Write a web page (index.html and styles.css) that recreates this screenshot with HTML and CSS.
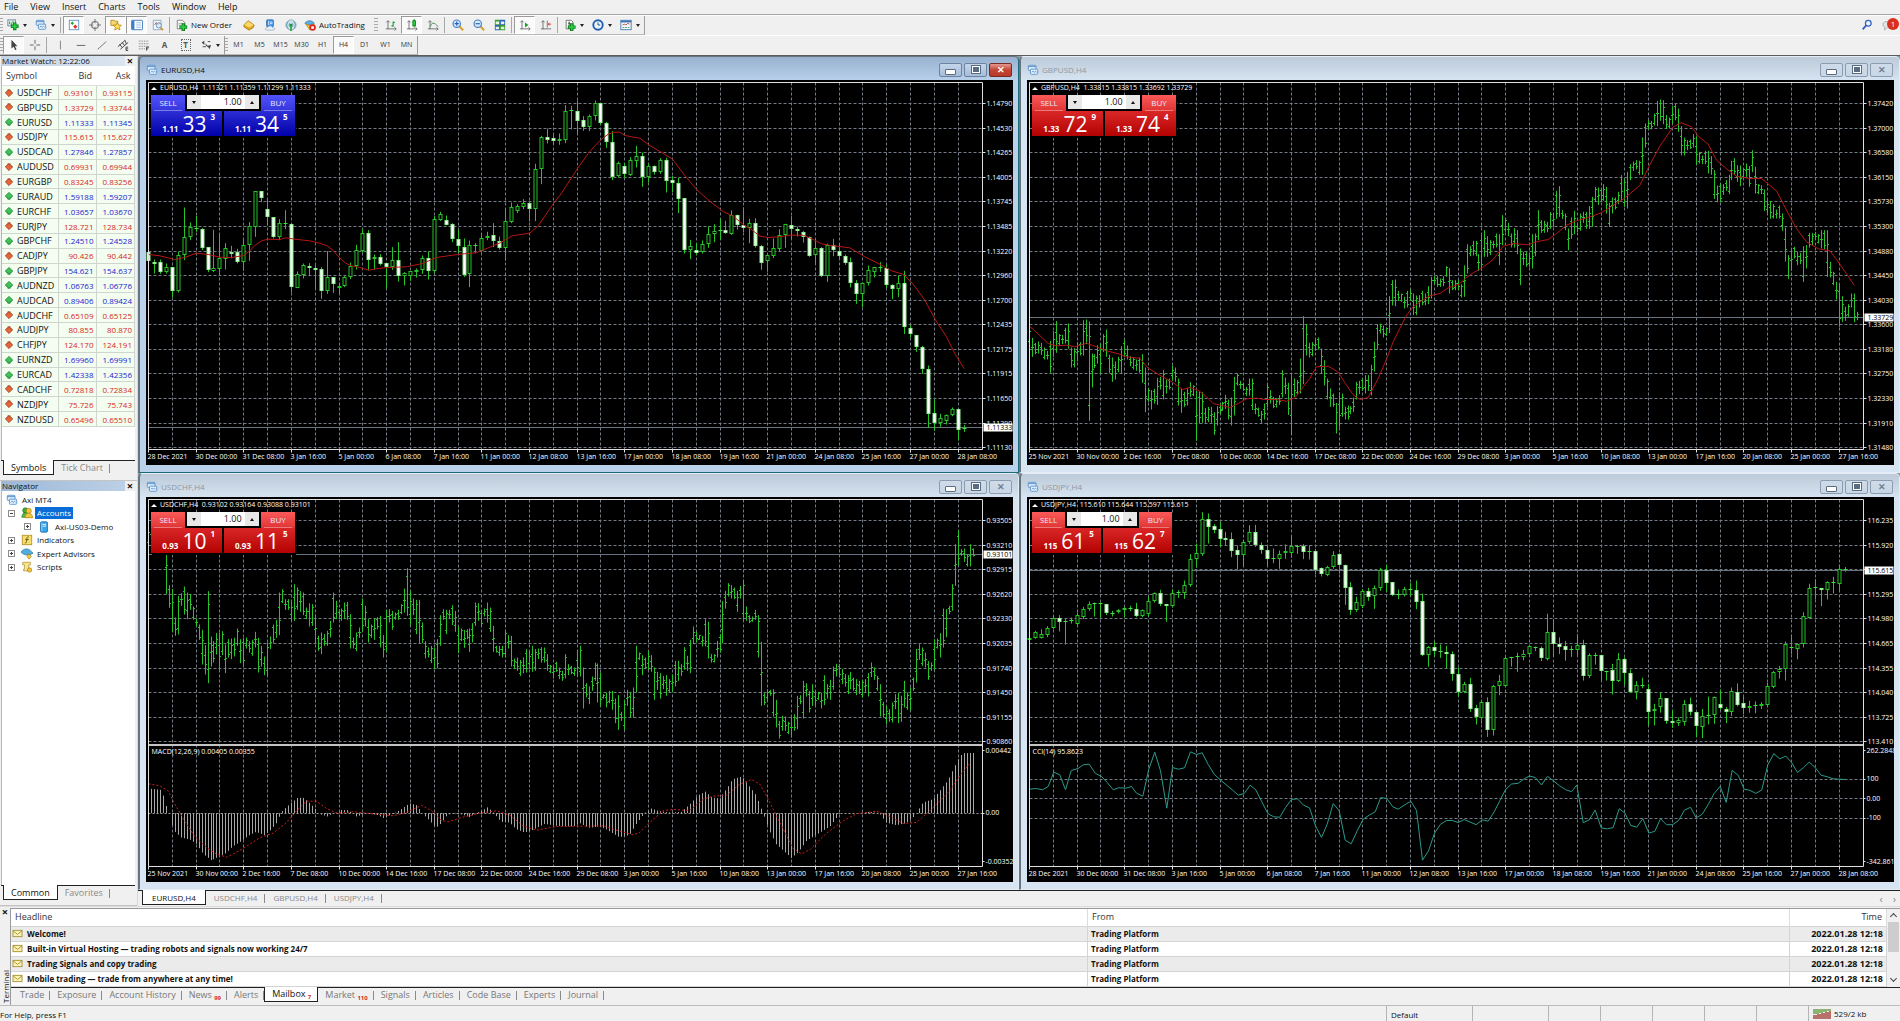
FILE: index.html
```html
<!DOCTYPE html>
<html lang="en">
<head>
<meta charset="utf-8">
<title>Axi MT4 - EURUSD,H4</title>
<link rel="stylesheet" href="styles.css">
</head>
<body>
<svg class="sprite" aria-hidden="true">
  <symbol id="i-plus" viewBox="0 0 14 14"><rect x="1" y="1" width="9" height="7" fill="#e4efe6" stroke="#5d86a8"/><path d="M3 6V3M5 7V4M7 5V2" stroke="#3a8a4a"/><path d="M9 4v9M4.500 8.500h9" stroke="#0b7a1c" stroke-width="4"/><path d="M9 5v7M5.500 8.500h7" stroke="#2ad043" stroke-width="2"/></symbol>
  <symbol id="i-windows" viewBox="0 0 14 14"><rect x="1.500" y="1.500" width="9" height="6" rx="1" fill="#dcecfb" stroke="#4f8cc9"/><path d="M1.500 3h9" stroke="#4f8cc9"/><rect x="4" y="6" width="8.500" height="6" rx="1" fill="#eaf4fd" stroke="#4f8cc9"/><path d="M5.500 10l1.500-2 1.500 2 1.500-2 1 2" fill="none" stroke="#4f8cc9" stroke-width=".8"/></symbol>
  <symbol id="i-market" viewBox="0 0 14 14"><rect x="1.500" y="1.500" width="11" height="11" fill="#fff" stroke="#5b8fc4"/><path d="M5 3l2 2-2 2-2-2z" fill="#1fa530"/><path d="M8.500 6.500l2.500 2.500-2.500 2.500L6 9z" fill="#e0301c"/></symbol>
  <symbol id="i-target" viewBox="0 0 14 14"><circle cx="7" cy="7" r="4" fill="none" stroke="#777" stroke-width="1.200"/><path d="M7 0v5M7 9v5M0 7h5M9 7h5" stroke="#777" stroke-width="1.200"/></symbol>
  <symbol id="i-star" viewBox="0 0 14 14"><path d="M1 1.500h4l1 1h3v5H1z" fill="#f7d774" stroke="#b38a1a"/><path d="M8.500 4l1.500 3 3.300.300-2.500 2.200.800 3.300-3.100-1.700-3 1.700.700-3.300L3.800 7.300 7.100 7z" fill="#ffdf4a" stroke="#a97b08" stroke-width=".8"/></symbol>
  <symbol id="i-terminal" viewBox="0 0 14 14"><rect x=".5" y="1.500" width="13" height="11" rx="1" fill="#fff" stroke="#2f6cb3"/><rect x="1" y="2" width="3" height="10" fill="#3d7cc9"/><path d="M6 4h6M6 6h6M6 8h6M6 10h6" stroke="#a9c6e8"/></symbol>
  <symbol id="i-tester" viewBox="0 0 14 14"><path d="M1.500 1.500h9v11h-9z" fill="#f3f7fb" stroke="#8aa0b5"/><path d="M3 7l2-3 2 3 2-3" fill="none" stroke="#c04a3a"/><circle cx="8" cy="7.500" r="3" fill="#d3e8fa" fill-opacity=".8" stroke="#5a8fc0"/><path d="M10 10l3 3" stroke="#d09a2a" stroke-width="2"/></symbol>
  <symbol id="i-order" viewBox="0 0 14 14"><path d="M1.500 1.500h6l3 3v7h-9z" fill="#fff" stroke="#777"/><path d="M3 5h5M3 7h3" stroke="#999"/><path d="M8.500 5v9M4 9.500h9" stroke="#0b7a1c" stroke-width="4"/><path d="M8.500 6v7M5 9.500h7" stroke="#2ad043" stroke-width="2"/></symbol>
  <symbol id="i-gold" viewBox="0 0 14 14"><path d="M1 7l5-5 7 5-1 3-5 3-6-4z" fill="#e3a81f" stroke="#9a6a08" stroke-width=".8"/><path d="M1.500 7L6 2.500 12.500 7 7.500 10z" fill="#fbd86a"/></symbol>
  <symbol id="i-vps" viewBox="0 0 14 14"><rect x="3" y="1" width="8" height="8" rx="1" fill="#2f8fe8" stroke="#1b62ab" stroke-width=".8"/><path d="M5.500 2v5M7 3.500h3M7 5.500h3" stroke="#fff"/><path d="M3 13c-3-1-1-4 1-3 1-3 6-2 6 0 3 0 3 3 1 3z" fill="#e6eef7" stroke="#8ca5c0" stroke-width=".8"/></symbol>
  <symbol id="i-signal" viewBox="0 0 14 14"><circle cx="7" cy="7" r="6" fill="#cfe3ea" stroke="#8fb0bc"/><path d="M4 11a5 5 0 010-8M10 11a5 5 0 000-8M5.500 9a3 3 0 010-4M8.500 9a3 3 0 000-4" fill="none" stroke="#4d93a6"/><circle cx="7" cy="7" r="1.500" fill="#1a8f3a"/><path d="M7 8v6" stroke="#27a548" stroke-width="2"/></symbol>
  <symbol id="i-auto" viewBox="0 0 14 14"><path d="M1 5c2-4 9-4 11 0-3 2-8 2-11 0z" fill="#5bb1e0" stroke="#2c7cae" stroke-width=".8"/><path d="M2 6l5 7 5-7c-3 2-7 2-10 0z" fill="#f3c53c" stroke="#b8860b" stroke-width=".8"/><circle cx="10" cy="10" r="3.800" fill="#d9281c"/><rect x="8.500" y="8.500" width="3" height="3" fill="#fff"/></symbol>
  <symbol id="i-bars" viewBox="0 0 14 14"><path d="M3.500 2v10M1 11.500h12M1.500 4l2-2 2 2M11 9.500l2 2-2 2" fill="none" stroke="#666"/><path d="M9.500 3v6M7.500 8h2M9.500 4h2" stroke="#18a02c" stroke-width="1.300"/></symbol>
  <symbol id="i-candle" viewBox="0 0 14 14"><path d="M3.500 2v10M1 11.500h12M1.500 4l2-2 2 2M11 9.500l2 2-2 2" fill="none" stroke="#666"/><path d="M9.500 0v10" stroke="#0b7a1c"/><rect x="8" y="2" width="3" height="6" fill="#2ad043" stroke="#0b7a1c"/></symbol>
  <symbol id="i-line" viewBox="0 0 14 14"><path d="M3.500 2v10M1 11.500h12M1.500 4l2-2 2 2M11 9.500l2 2-2 2" fill="none" stroke="#666"/><path d="M4 9c1-5 4-6 9 0" fill="none" stroke="#3b8a48"/></symbol>
  <symbol id="i-zin" viewBox="0 0 14 14"><path d="M8 8l5 5" stroke="#d6a32c" stroke-width="2.500"/><circle cx="5.500" cy="5.500" r="4.300" fill="#d8eafb" stroke="#3f7fc6" stroke-width="1.300"/><path d="M3 5.500h5M5.500 3v5" stroke="#2b62b8" stroke-width="1.400"/></symbol>
  <symbol id="i-zout" viewBox="0 0 14 14"><path d="M8 8l5 5" stroke="#d6a32c" stroke-width="2.500"/><circle cx="5.500" cy="5.500" r="4.300" fill="#d8eafb" stroke="#3f7fc6" stroke-width="1.300"/><path d="M3 5.500h5" stroke="#2b62b8" stroke-width="1.400"/></symbol>
  <symbol id="i-tile" viewBox="0 0 14 14"><path d="M1 1h6v6H1zM7 7h6v6H7z" fill="#3f9c2c"/><path d="M7 1h6v6H7zM1 7h6v6H1z" fill="#2d63b8"/><path d="M2 3h4v3H2zM8 3h4v3H8zM2 9h4v3H2zM8 9h4v3H8z" fill="#e8f4e4"/></symbol>
  <symbol id="i-scroll" viewBox="0 0 14 14"><path d="M3.500 2v10M1 11.500h12M1.500 4l2-2 2 2M11 9.500l2 2-2 2" fill="none" stroke="#666"/><path d="M7 4l4 3-4 3z" fill="#18a02c"/></symbol>
  <symbol id="i-shift" viewBox="0 0 14 14"><path d="M3.500 2v10M1 11.500h12M1.500 4l2-2 2 2M8.500 2v8" fill="none" stroke="#666"/><path d="M13 6H9.500M11 4.500L9.500 6 11 7.500" stroke="#c8321e" fill="none"/></symbol>
  <symbol id="i-ind" viewBox="0 0 14 14"><path d="M2.500 1.500h6l2 2v8h-8z" fill="#fff" stroke="#666"/><path d="M6 3v6M5 5h2" stroke="#333"/><path d="M9 5v9M4.500 9.500h9" stroke="#0b7a1c" stroke-width="4"/><path d="M9 6v7M5.500 9.500h7" stroke="#2ad043" stroke-width="2"/></symbol>
  <symbol id="i-clock" viewBox="0 0 14 14"><circle cx="7" cy="7" r="5.500" fill="#e9f3fd" stroke="#1f5fae" stroke-width="2.200"/><path d="M7 4v3h2.500" fill="none" stroke="#1f3f70"/></symbol>
  <symbol id="i-tpl" viewBox="0 0 14 14"><rect x="1" y="1.500" width="12" height="11" fill="#f5f9fd" stroke="#3874b5"/><path d="M1 3h12" stroke="#3874b5" stroke-width="2"/><path d="M3 7l2-1 2 1 2-2 2 1" fill="none" stroke="#b8382a"/><path d="M3 10h8" stroke="#3a8a4a" stroke-dasharray="2 1"/></symbol>
  <symbol id="i-cursor" viewBox="0 0 14 14"><path d="M4 1v10l2.500-2 2 4 1.500-1-2-3.500H11z" fill="#444"/></symbol>
  <symbol id="i-cross" viewBox="0 0 14 14"><path d="M7 1v4.500M7 8.500V13M1 7h4.500M8.500 7H13" stroke="#555"/></symbol>
  <symbol id="i-vline" viewBox="0 0 14 14"><path d="M7.500 2v10" stroke="#777"/></symbol>
  <symbol id="i-hline" viewBox="0 0 14 14"><path d="M2 7.500h10" stroke="#555"/></symbol>
  <symbol id="i-trend" viewBox="0 0 14 14"><path d="M2 12l10-9" stroke="#666"/></symbol>
  <symbol id="i-chan" viewBox="0 0 14 14"><path d="M1 9l8-7M4 12l9-8M3 6l3 4M6 4l3 4M9 1l2 5" stroke="#444" stroke-width="1.100"/><path d="M13 9.500h-2.500v4H13M10.500 11.500H13" stroke="#333" fill="none"/></symbol>
  <symbol id="i-fibo" viewBox="0 0 14 14"><path d="M1 2.500h12M1 5.500h12M1 8.500h12M1 11.500h7" stroke="#666" stroke-dasharray="1 1"/><path d="M13 9.500h-3v4M10 11.500h2" stroke="#333" fill="none"/></symbol>
  <symbol id="i-arrows" viewBox="0 0 14 14"><path d="M2 4l3-2v5zM6 5l3 3 4-1-2 5-1-2-3-2z" fill="#444"/><path d="M3 9h4M9 3h3" stroke="#444"/></symbol>
  <symbol id="i-search" viewBox="0 0 14 14"><circle cx="8.500" cy="5" r="3.300" fill="#eef4fc" stroke="#3464c0" stroke-width="1.500"/><path d="M6 7.500L2 12" stroke="#3464c0" stroke-width="2.200"/></symbol>
  <symbol id="i-chat" viewBox="0 0 14 14"><path d="M1 6c0-4 10-4 10 0s-4 4-5 4l-3 3V9C2 9 1 8 1 6z" fill="#e4e4e4" stroke="#a8a8a8"/></symbol>
  <symbol id="i-down" viewBox="0 0 10 10"><path d="M3.500 1h3v2H8l1.500 2L5 9.500.5 5 2 3h1.500z" fill="#e8643a" stroke="#9c3a1c"/></symbol>
  <symbol id="i-up" viewBox="0 0 10 10"><path d="M3.500 9h3V7H8l1.500-2L5 .5.5 5 2 7h1.500z" fill="#3fc45a" stroke="#137a2a"/></symbol>
  <symbol id="i-users" viewBox="0 0 14 14"><circle cx="5" cy="4" r="3" fill="#3fae3c" stroke="#1e7a22" stroke-width=".8"/><path d="M1 12c0-7 8-7 8 0z" fill="#55bf45" stroke="#1e7a22" stroke-width=".8"/><circle cx="9" cy="4.500" r="3" fill="#f4c93c" stroke="#a87c10" stroke-width=".8"/><path d="M4.500 12.500c0-7 9-7 9 0z" fill="#f4c93c" stroke="#a87c10" stroke-width=".8"/></symbol>
  <symbol id="i-server" viewBox="0 0 14 14"><rect x="3" y="1" width="8" height="12" rx="1" fill="#3aa5ea" stroke="#1a6cb0"/><path d="M5.500 4h4M5.500 6h4" stroke="#fff"/><path d="M4.500 2v10" stroke="#a8dbfa"/></symbol>
  <symbol id="i-func" viewBox="0 0 14 14"><rect x="1.500" y="1.500" width="11" height="11" fill="#f7df6e" stroke="#b39124"/><path d="M9 3.500c-2-1-2 1-2.300 3.500S6 11 4.500 10.500M5 6.500h4" fill="none" stroke="#5d4a0c"/></symbol>
  <symbol id="i-hat" viewBox="0 0 14 14"><path d="M0 5c3-5 9-5 12-1l2 2C10 9 4 9 0 5z" fill="#4faede" stroke="#23719f" stroke-width=".8"/><path d="M9 7l3 2.500L9.500 13 7 10z" fill="#f6cf4a" stroke="#a87c10" stroke-width=".8"/></symbol>
  <symbol id="i-script" viewBox="0 0 14 14"><path d="M2 1.500h9v3H9v7H3v-2h1v-5H2z" fill="#f9e48e" stroke="#a88a2a" stroke-width=".8"/><circle cx="10" cy="10.500" r="2.500" fill="#f3c53c" stroke="#a87c10" stroke-width=".8"/></symbol>
  <symbol id="i-mail" viewBox="0 0 12 10"><rect x="1" y="1.500" width="10" height="7" fill="#fdf3b4" stroke="#a3912f"/><path d="M1 2l5 4 5-4" fill="none" stroke="#a3912f"/></symbol>
</svg>

<nav class="menubar" aria-label="Main menu">
  <a href="#file">File</a><a href="#view">View</a><a href="#insert">Insert</a><a href="#charts">Charts</a><a href="#tools">Tools</a><a href="#window">Window</a><a href="#help">Help</a>
</nav>

<div class="toolrow">
  <div class="toolbar" role="toolbar" aria-label="Standard">
    <span class="grip"></span>
    <button class="tool drop" title="New chart"><svg><use href="#i-plus"/></svg></button>
    <button class="tool drop" title="Profiles"><svg><use href="#i-windows"/></svg></button>
    <span class="sep"></span>
    <button class="tool on" title="Market Watch"><svg><use href="#i-market"/></svg></button>
    <button class="tool" title="Data Window"><svg><use href="#i-target"/></svg></button>
    <button class="tool on" title="Navigator"><svg><use href="#i-star"/></svg></button>
    <button class="tool on" title="Terminal"><svg><use href="#i-terminal"/></svg></button>
    <button class="tool" title="Strategy Tester"><svg><use href="#i-tester"/></svg></button>
    <span class="sep"></span>
    <button class="tool order"><svg><use href="#i-order"/></svg>New Order</button>
    <button class="tool" title="MetaEditor"><svg><use href="#i-gold"/></svg></button>
    <button class="tool" title="Virtual Hosting"><svg><use href="#i-vps"/></svg></button>
    <button class="tool" title="Signals"><svg><use href="#i-signal"/></svg></button>
    <button class="tool auto"><svg><use href="#i-auto"/></svg>AutoTrading</button>
    <span class="grip mid"></span>
    <button class="tool" title="Bar Chart"><svg><use href="#i-bars"/></svg></button>
    <button class="tool on" title="Candlesticks"><svg><use href="#i-candle"/></svg></button>
    <button class="tool" title="Line Chart"><svg><use href="#i-line"/></svg></button>
    <span class="sep"></span>
    <button class="tool" title="Zoom In"><svg><use href="#i-zin"/></svg></button>
    <button class="tool" title="Zoom Out"><svg><use href="#i-zout"/></svg></button>
    <button class="tool" title="Tile Windows"><svg><use href="#i-tile"/></svg></button>
    <span class="sep"></span>
    <button class="tool on" title="Auto Scroll"><svg><use href="#i-scroll"/></svg></button>
    <button class="tool" title="Chart Shift"><svg><use href="#i-shift"/></svg></button>
    <span class="sep"></span>
    <button class="tool drop" title="Indicators"><svg><use href="#i-ind"/></svg></button>
    <button class="tool drop" title="Periods"><svg><use href="#i-clock"/></svg></button>
    <button class="tool drop" title="Templates"><svg><use href="#i-tpl"/></svg></button>
  </div>
  <div class="corner">
    <button class="tool" title="Search"><svg><use href="#i-search"/></svg></button>
    <button class="tool" title="Messages"><svg><use href="#i-chat"/></svg><span class="badge">1</span></button>
  </div>
</div>

<div class="toolrow">
  <div class="toolbar" role="toolbar" aria-label="Line studies">
    <span class="grip"></span>
    <button class="tool on" title="Cursor"><svg><use href="#i-cursor"/></svg></button>
    <button class="tool" title="Crosshair"><svg><use href="#i-cross"/></svg></button>
    <span class="sep"></span>
    <button class="tool" title="Vertical Line"><svg><use href="#i-vline"/></svg></button>
    <button class="tool" title="Horizontal Line"><svg><use href="#i-hline"/></svg></button>
    <button class="tool" title="Trendline"><svg><use href="#i-trend"/></svg></button>
    <button class="tool" title="Channel"><svg><use href="#i-chan"/></svg></button>
    <button class="tool" title="Fibonacci"><svg><use href="#i-fibo"/></svg></button>
    <button class="tool letter" title="Text">A</button>
    <button class="tool letter" title="Text Label"><span class="label-t">T</span></button>
    <button class="tool drop" title="Arrows"><svg><use href="#i-arrows"/></svg></button>
  </div>
  <div class="toolbar periods" role="toolbar" aria-label="Periods">
    <span class="grip"></span>
    <button class="tool">M1</button><button class="tool">M5</button><button class="tool">M15</button><button class="tool">M30</button><button class="tool">H1</button><button class="tool on">H4</button><button class="tool">D1</button><button class="tool">W1</button><button class="tool">MN</button>
  </div>
</div>

<main class="workspace">
  <aside class="side">
    <section class="panel">
      <header class="panel-title quiet"><h2>Market Watch: 12:22:06</h2><button title="Close">×</button></header>
      <div class="panel-body">
        <table class="quotes">
          <thead><tr><th>Symbol</th><th>Bid</th><th>Ask</th></tr></thead>
          <tbody>
            <tr class="dn"><td><svg><use href="#i-down"/></svg>USDCHF</td><td>0.93101</td><td>0.93115</td></tr>
            <tr class="dn"><td><svg><use href="#i-down"/></svg>GBPUSD</td><td>1.33729</td><td>1.33744</td></tr>
            <tr class="up"><td><svg><use href="#i-up"/></svg>EURUSD</td><td>1.11333</td><td>1.11345</td></tr>
            <tr class="dn"><td><svg><use href="#i-down"/></svg>USDJPY</td><td>115.615</td><td>115.627</td></tr>
            <tr class="up"><td><svg><use href="#i-up"/></svg>USDCAD</td><td>1.27846</td><td>1.27857</td></tr>
            <tr class="dn"><td><svg><use href="#i-down"/></svg>AUDUSD</td><td>0.69931</td><td>0.69944</td></tr>
            <tr class="dn"><td><svg><use href="#i-down"/></svg>EURGBP</td><td>0.83245</td><td>0.83256</td></tr>
            <tr class="up"><td><svg><use href="#i-up"/></svg>EURAUD</td><td>1.59188</td><td>1.59207</td></tr>
            <tr class="up"><td><svg><use href="#i-up"/></svg>EURCHF</td><td>1.03657</td><td>1.03670</td></tr>
            <tr class="dn"><td><svg><use href="#i-down"/></svg>EURJPY</td><td>128.721</td><td>128.734</td></tr>
            <tr class="up"><td><svg><use href="#i-up"/></svg>GBPCHF</td><td>1.24510</td><td>1.24528</td></tr>
            <tr class="dn"><td><svg><use href="#i-down"/></svg>CADJPY</td><td>90.426</td><td>90.442</td></tr>
            <tr class="up"><td><svg><use href="#i-up"/></svg>GBPJPY</td><td>154.621</td><td>154.637</td></tr>
            <tr class="up"><td><svg><use href="#i-up"/></svg>AUDNZD</td><td>1.06763</td><td>1.06776</td></tr>
            <tr class="up"><td><svg><use href="#i-up"/></svg>AUDCAD</td><td>0.89406</td><td>0.89424</td></tr>
            <tr class="dn"><td><svg><use href="#i-down"/></svg>AUDCHF</td><td>0.65109</td><td>0.65125</td></tr>
            <tr class="dn"><td><svg><use href="#i-down"/></svg>AUDJPY</td><td>80.855</td><td>80.870</td></tr>
            <tr class="dn"><td><svg><use href="#i-down"/></svg>CHFJPY</td><td>124.170</td><td>124.191</td></tr>
            <tr class="up"><td><svg><use href="#i-up"/></svg>EURNZD</td><td>1.69960</td><td>1.69991</td></tr>
            <tr class="up"><td><svg><use href="#i-up"/></svg>EURCAD</td><td>1.42338</td><td>1.42356</td></tr>
            <tr class="dn"><td><svg><use href="#i-down"/></svg>CADCHF</td><td>0.72818</td><td>0.72834</td></tr>
            <tr class="dn"><td><svg><use href="#i-down"/></svg>NZDJPY</td><td>75.726</td><td>75.743</td></tr>
            <tr class="dn"><td><svg><use href="#i-down"/></svg>NZDUSD</td><td>0.65496</td><td>0.65510</td></tr>
          </tbody>
        </table>
      </div>
      <div class="tabs side-tabs"><button class="tab active">Symbols</button><button class="tab">Tick Chart</button></div>
    </section>

    <section class="panel">
      <header class="panel-title"><h2>Navigator</h2><button title="Close">×</button></header>
      <div class="panel-body">
        <ul class="tree">
          <li class="root"><svg><use href="#i-windows"/></svg><span>Axi MT4</span></li>
          <li><i class="box minus"></i><svg><use href="#i-users"/></svg><span class="picked">Accounts</span></li>
          <li class="child"><i class="box"></i><svg><use href="#i-server"/></svg><span>Axi-US03-Demo</span></li>
          <li><i class="box"></i><svg><use href="#i-func"/></svg><span>Indicators</span></li>
          <li><i class="box"></i><svg><use href="#i-hat"/></svg><span>Expert Advisors</span></li>
          <li><i class="box"></i><svg><use href="#i-script"/></svg><span>Scripts</span></li>
        </ul>
      </div>
      <div class="tabs side-tabs"><button class="tab active">Common</button><button class="tab">Favorites</button></div>
    </section>
  </aside>

  <section class="desk">
    <div class="windows">
      <article class="win active">
        <header class="win-title"><svg><use href="#i-windows"/></svg><h3>EURUSD,H4</h3>
          <div class="win-buttons"><button class="wb min" title="Minimize"></button><button class="wb max" title="Maximize"></button><button class="wb close" title="Close">✕</button></div></header>
        <div class="chart">
          <svg class="plot" data-chart="eurusd"></svg>
          <p class="info">EURUSD,H4&nbsp; 1.11321 1.11359 1.11299 1.11333</p>
          <form class="deal blue">
            <button type="button" class="side-btn">SELL</button>
            <div class="volume"><button type="button" class="vdown" title="Less"></button><input type="text" value="1.00" aria-label="Volume"><button type="button" class="vup" title="More"></button></div>
            <button type="button" class="side-btn">BUY</button>
            <button type="button" class="price"><small>1.11</small><b>33</b><sup>3</sup></button>
            <button type="button" class="price"><small>1.11</small><b>34</b><sup>5</sup></button>
          </form>
        </div>
      </article>

      <article class="win">
        <header class="win-title"><svg><use href="#i-windows"/></svg><h3>GBPUSD,H4</h3>
          <div class="win-buttons"><button class="wb min" title="Minimize"></button><button class="wb max" title="Maximize"></button><button class="wb close" title="Close">✕</button></div></header>
        <div class="chart">
          <svg class="plot" data-chart="gbpusd"></svg>
          <p class="info">GBPUSD,H4&nbsp; 1.33815 1.33815 1.33692 1.33729</p>
          <form class="deal red">
            <button type="button" class="side-btn">SELL</button>
            <div class="volume"><button type="button" class="vdown" title="Less"></button><input type="text" value="1.00" aria-label="Volume"><button type="button" class="vup" title="More"></button></div>
            <button type="button" class="side-btn">BUY</button>
            <button type="button" class="price"><small>1.33</small><b>72</b><sup>9</sup></button>
            <button type="button" class="price"><small>1.33</small><b>74</b><sup>4</sup></button>
          </form>
        </div>
      </article>

      <article class="win">
        <header class="win-title"><svg><use href="#i-windows"/></svg><h3>USDCHF,H4</h3>
          <div class="win-buttons"><button class="wb min" title="Minimize"></button><button class="wb max" title="Maximize"></button><button class="wb close" title="Close">✕</button></div></header>
        <div class="chart">
          <svg class="plot" data-chart="usdchf"></svg>
          <p class="info">USDCHF,H4&nbsp; 0.93102 0.93164 0.93088 0.93101</p>
          <form class="deal red">
            <button type="button" class="side-btn">SELL</button>
            <div class="volume"><button type="button" class="vdown" title="Less"></button><input type="text" value="1.00" aria-label="Volume"><button type="button" class="vup" title="More"></button></div>
            <button type="button" class="side-btn">BUY</button>
            <button type="button" class="price"><small>0.93</small><b>10</b><sup>1</sup></button>
            <button type="button" class="price"><small>0.93</small><b>11</b><sup>5</sup></button>
          </form>
        </div>
      </article>

      <article class="win">
        <header class="win-title"><svg><use href="#i-windows"/></svg><h3>USDJPY,H4</h3>
          <div class="win-buttons"><button class="wb min" title="Minimize"></button><button class="wb max" title="Maximize"></button><button class="wb close" title="Close">✕</button></div></header>
        <div class="chart">
          <svg class="plot" data-chart="usdjpy"></svg>
          <p class="info">USDJPY,H4&nbsp; 115.610 115.644 115.597 115.615</p>
          <form class="deal red narrow">
            <button type="button" class="side-btn">SELL</button>
            <div class="volume"><button type="button" class="vdown" title="Less"></button><input type="text" value="1.00" aria-label="Volume"><button type="button" class="vup" title="More"></button></div>
            <button type="button" class="side-btn">BUY</button>
            <button type="button" class="price"><small>115</small><b>61</b><sup>5</sup></button>
            <button type="button" class="price"><small>115</small><b>62</b><sup>7</sup></button>
          </form>
        </div>
      </article>
    </div>
    <div class="tabs desk-tabs">
      <button class="tab active">EURUSD,H4</button><button class="tab">USDCHF,H4</button><button class="tab">GBPUSD,H4</button><button class="tab">USDJPY,H4</button>
      <span class="tab-scroll"><button title="Left">‹</button><button title="Right">›</button></span>
    </div>
  </section>
</main>

<section class="terminal">
  <div class="handle"><button title="Close">×</button><span>Terminal</span></div>
  <div class="mailbox">
    <div class="mail-view">
      <table class="mail">
        <colgroup><col class="c-head"><col class="c-from"><col class="c-time"></colgroup>
        <thead><tr><th>Headline</th><th>From</th><th>Time</th></tr></thead>
        <tbody>
          <tr><td><svg><use href="#i-mail"/></svg>Welcome!</td><td>Trading Platform</td><td>2022.01.28 12:18</td></tr>
          <tr><td><svg><use href="#i-mail"/></svg>Built-in Virtual Hosting — trading robots and signals now working 24/7</td><td>Trading Platform</td><td>2022.01.28 12:18</td></tr>
          <tr><td><svg><use href="#i-mail"/></svg>Trading Signals and copy trading</td><td>Trading Platform</td><td>2022.01.28 12:18</td></tr>
          <tr><td><svg><use href="#i-mail"/></svg>Mobile trading — trade from anywhere at any time!</td><td>Trading Platform</td><td>2022.01.28 12:18</td></tr>
        </tbody>
      </table>
      <div class="scrollbar"><i class="arrow"></i><i class="thumb"></i><i class="arrow down"></i></div>
    </div>
    <div class="tabs term-tabs">
      <button class="tab">Trade</button><button class="tab">Exposure</button><button class="tab">Account History</button><button class="tab">News <sub>99</sub></button><button class="tab">Alerts</button><button class="tab active">Mailbox <sub>7</sub></button><button class="tab">Market <sub>110</sub></button><button class="tab">Signals</button><button class="tab">Articles</button><button class="tab">Code Base</button><button class="tab">Experts</button><button class="tab">Journal</button>
    </div>
  </div>
</section>

<footer class="status">
  <span class="help">For Help, press F1</span><span class="profile">Default</span><span></span><span></span><span></span><span></span><span></span><span></span>
  <span class="net"><svg viewBox="0 0 18 10"><path d="M1 0v5M3 0v5M5 0v5M7 0v4M9 0v4M11 0v3M13 0v3M15 0v2M17 0v2" stroke="#5f9a3c" stroke-width="1.400"/><path d="M1 6v4M3 6v4M5 5v5M7 5v5M9 4v6M11 4v6M13 3v7M15 3v7M17 2v8" stroke="#a03a30" stroke-width="1.400"/></svg>529/2 kb</span>
</footer>
<script src="charts.js"></script>
</body>
</html>
```

FILE: styles.css
```css
* { box-sizing: border-box; }
:root { --ui: "Open Sans", "Noto Sans", sans-serif; }
html, body { height: 100%; }
body {
  margin: 0; display: flex; flex-direction: column; overflow: hidden;
  font: 8px/12px var(--ui); color: #111; background: #f0f0f0;
}
button, input { font: inherit; color: inherit; margin: 0; padding: 0; border: 0; background: none; }
a { color: inherit; text-decoration: none; }
h2, h3, p, ul { margin: 0; padding: 0; font: inherit; list-style: none; }
table { border-collapse: collapse; table-layout: fixed; width: 100%; }
th, td { padding: 0; font-weight: inherit; text-align: left; white-space: nowrap; }
.sprite { position: absolute; width: 0; height: 0; }

.menubar { flex: none; display: flex; gap: 12px; height: 15px; padding: 0 4px; border-bottom: 1px solid #a8a8a8; font-size: 9px; line-height: 13px; }

.toolrow { flex: none; display: flex; height: 20px; border-top: 1px solid #fcfcfc; }
.toolbar { display: flex; align-items: center; height: 19px; border-right: 1px solid #9c9c9c; border-bottom: 1px solid #b8b8b8; }
.grip { width: 3px; height: 15px; background: repeating-linear-gradient(#a8a8a8 0 1px, #f0f0f0 1px 3px); }
.grip.mid { width: 4px; margin: 0 2px; }
.sep { width: 4px; height: 16px; background: linear-gradient(90deg, transparent 1px, #a8a8a8 1px 2px, transparent 2px); }
.tool { position: relative; display: flex; align-items: center; justify-content: center; width: 21px; height: 18px; color: #333; }
.tool svg { width: 12px; height: 12px; flex: none; }
.tool.on { background: #fafafa; border: 1px solid; border-color: #9a9a9a #fff #fff #9a9a9a; }
.tool.drop { width: 28px; justify-content: flex-start; gap: 4px; padding-left: 4px; }
.tool.drop::after { content: ""; border: 2px solid transparent; border-top: 3px solid #222; border-bottom: 0; }
.tool.order, .tool.auto { width: 66px; justify-content: flex-start; gap: 3px; padding-left: 4px; color: #111; }
.tool.auto { width: 71px; padding-left: 3px; }
.tool.letter { font-weight: bold; color: #555; }
.label-t { border: 1px dotted #666; width: 10px; line-height: 10px; }
.periods { font-size: 7px; }
.corner { margin-left: auto; display: flex; padding-right: 2px; }
.badge { position: absolute; right: -1px; top: 2px; width: 12px; height: 12px; border-radius: 50%; background: #d8301c; color: #fff; text-align: center; line-height: 12px; }

.workspace { flex: 1; min-height: 0; display: grid; grid-template-columns: 138px minmax(0, 1fr); border-top: 1px solid #5c5c5c; }
.side { display: grid; grid-template-rows: 1fr 1fr; min-height: 0; border-right: 1px solid #d8d8d8; }
.panel { display: flex; flex-direction: column; min-height: 0; padding: 0 2px 5px 1px; border-bottom: 1px solid #c4c4c4; }
.panel-title { display: flex; height: 10px; line-height: 10px; }
.panel-title h2 { flex: 1; padding-left: 1px; background: linear-gradient(90deg, #9db8d6, #bcd0e6); }
.panel-title.quiet h2 { background: linear-gradient(90deg, #c4d3e4, #dbe5f0); }
.panel-title button { width: 10px; font-weight: bold; font-size: 11px; line-height: 8px; }
.panel-body { flex: 1; min-height: 0; background: #fff; border-left: 1px solid #b8b8b8; overflow: hidden; }

.quotes { height: 361px; }
.quotes th { height: 19px; border-bottom: 1px solid #ddd; padding: 1px 4px 0; color: #333; font-size: 9px; }
.quotes th:first-child { width: 56px; }
.quotes th:nth-child(2) { width: 38px; }
.quotes td { background: #f3fdf0; border: 1px solid #cfd6cf; border-left: 0; padding-left: 15px; position: relative; line-height: 13px; }
.quotes td:first-child { font-size: 9px; }
.quotes th + th, .quotes td + td { text-align: right; padding: 0 2px; }
.quotes th + th { padding: 1px 4px 0; }
.quotes td svg { position: absolute; left: 3px; top: 3px; width: 8px; height: 8px; }
.quotes .dn td + td { color: #d8281c; }
.quotes .up td + td { color: #1c1cd0; }

.tabs { flex: none; display: flex; height: 15px; line-height: 13px; border-top: 1px solid #222; color: #8a8a8a; }
.side-tabs { font-size: 9px; padding-left: 2px; }
.tab { padding: 0 7px; position: relative; height: 13px; }
.tab::after { content: ""; position: absolute; right: 0; top: 3px; height: 9px; border-right: 1px solid #8a8a8a; }
.tab.active { margin-top: -1px; height: 15px; background: #fff; color: #111; border: 1px solid #222; border-top: 0; }
.tab.active::after { display: none; }
.tab sub { font-size: 6px; line-height: 6px; vertical-align: -2px; font-weight: bold; color: #d8281c; }

.tree { display: flex; flex-direction: column; height: 83px; padding: 2px 0 0 6px; }
.tree li { flex: 1; display: flex; align-items: center; gap: 4px; }
.tree li.root svg { margin-left: -2px; }
.tree li.child { padding-left: 16px; gap: 5px; }
.tree svg { width: 12px; height: 12px; }
.tree .picked { background: #0a6cd6; color: #fff; padding: 0 2px; margin-left: -2px; }
.box { width: 7px; height: 7px; margin-right: 2px; border: 1px solid #8c8c8c; background: linear-gradient(#444, #444) center / 3px 1px no-repeat, linear-gradient(#444, #444) center / 1px 3px no-repeat; }
.box.minus { background: linear-gradient(#444, #444) center / 3px 1px no-repeat; }

.desk { display: flex; flex-direction: column; min-width: 0; min-height: 0; }
.windows { flex: 1; min-height: 0; display: grid; grid-template: 1fr 1fr / 1fr 1fr; background: #8a98a4; border-bottom: 1px solid #222; }
.win { display: flex; flex-direction: column; min-width: 0; min-height: 0; padding: 0 5px 7px 6px; border: 1px solid #e4edf5; border-left: 2px solid #66757f; border-radius: 5px 5px 0 0; background: linear-gradient(#bccad9, #d7e4f1 24px); }
.win.active { background: linear-gradient(#98b1d0, #b9d1ea 24px); border-color: #66757f #1b6c78 #1b6c78 #66757f; }
.win-title { flex: none; height: 23px; display: flex; align-items: center; gap: 3px; padding: 2px 1px 0 0; color: #8d97a3; }
.win.active .win-title { color: #111; }
.win-title svg { width: 12px; height: 12px; }
.win-buttons { margin-left: auto; display: flex; gap: 2px; }
.wb { width: 23px; height: 14px; border: 1px solid #8d9db1; border-radius: 2px; background: linear-gradient(#cfdbe8, #c8d6e5); display: grid; place-items: center; font-size: 9px; line-height: 10px; font-weight: bold; color: #6f7f92; }
.win.active .wb { border-color: #6d83a0; background: linear-gradient(#c5d6ea, #a4bcd8); }
.wb.min::before { content: ""; width: 9px; height: 4px; margin-top: 4px; border: 1px solid #5a6c82; border-radius: 1px; background: #fff; }
.wb.max::before { content: ""; width: 8px; height: 7px; border: 1px solid #5a6c82; background: #5a6c82; box-shadow: inset 0 0 0 1px #fff; }
.win.active .wb.close { background: linear-gradient(#e49a90, #c44433 50%, #b93a2a); border-color: #7a2a22; color: #fff; }

.chart { position: relative; flex: 1; min-height: 0; background: #000; overflow: hidden; color: #fff; }
.plot { position: absolute; inset: 0; width: 100%; height: 100%; display: block; font: 7px var(--ui); }
.info { position: absolute; left: 14px; top: 4px; font-size: 7px; line-height: 8px; white-space: pre; }
.info::before { content: ""; position: absolute; left: -9px; top: 3px; border: 3px solid transparent; border-bottom: 3px solid #fff; border-top: 0; }
.deal { position: absolute; left: 5px; top: 15px; width: 144px; height: 42px; display: grid; grid-template: 16px 25px / 34px 36px 36px 34px; column-gap: 1px; justify-content: space-between; background: #000; box-shadow: 1px 1px 0 #000; }
.deal.narrow { width: 140px; grid-template-columns: 33px 35px 35px 33px; }
.side-btn { position: relative; color: #e8e8ff; }
.side-btn:nth-of-type(2) { grid-column: 4; }
.side-btn::after { content: ""; position: absolute; left: 3px; right: 3px; bottom: 0; border-top: 1px solid rgba(255, 255, 255, .35); }
.blue .side-btn { background: linear-gradient(#5252fa, #3535dc); }
.blue .price { background: linear-gradient(#2d2dd6, #0000a8); }
.red .side-btn { background: linear-gradient(#fb5a5a, #e03434); }
.red .price { background: linear-gradient(#da2626, #b30202); }
.volume { grid-column: 2 / 4; display: grid; grid-template-columns: 14px 1fr 14px; height: 14px; margin: 0 1px; background: #fff; color: #111; }
.volume input { width: 100%; min-width: 0; text-align: right; padding-right: 3px; font-size: 9px; }
.volume button { background: #e8e8e8; display: grid; place-items: center; }
.volume button::before { content: ""; border: 2px solid transparent; }
.volume .vdown::before { border-top: 3px solid #111; border-bottom: 0; }
.volume .vup::before { border-bottom: 3px solid #111; border-top: 0; }
.price { grid-column: span 2; display: flex; justify-content: center; align-items: flex-end; gap: 4px; padding-left: 4px; line-height: 24px; color: #fff; }
.price small { font-size: 8px; font-weight: bold; line-height: 15px; }
.price b { font-size: 21px; font-weight: 400; }
.price sup { font-size: 8px; font-weight: bold; line-height: 11px; align-self: flex-start; }

.desk-tabs { padding-left: 4px; border-top: 0; }
.desk-tabs .tab { padding: 0 9px; }
.desk-tabs .tab:not(.active) { padding: 0 8px; }
.tab-scroll { margin-left: auto; display: flex; gap: 10px; padding-right: 4px; font-size: 11px; }

.terminal { flex: none; display: grid; grid-template-columns: 10px minmax(0, 1fr); padding-top: 1px; height: 99px; border-top: 1px solid #dcdcdc; }
.handle { display: flex; flex-direction: column; justify-content: space-between; align-items: center; padding-bottom: 2px; }
.handle button { font-weight: bold; font-size: 11px; line-height: 8px; }
.handle span { writing-mode: vertical-rl; transform: rotate(180deg); line-height: 9px; }
.mailbox { display: flex; flex-direction: column; border-left: 1px solid #9a9a9a; min-width: 0; }
.mail-view { flex: 1; display: flex; background: #fff; border-top: 1px solid #9a9a9a; overflow: hidden; }
.mail { flex: 1; width: auto; line-height: 14px; }
.mail th { height: 17px; padding: 0 4px; border-right: 1px solid #ddd; color: #333; font-size: 9px; }
.mail td { height: 15px; padding: 0 3px; border: 1px solid #d4d4d4; border-left: 0; font-weight: bold; }
.mail td:last-child { font-size: 9px; }
.mail td:first-child { padding-left: 16px; position: relative; }
.mail td svg { position: absolute; left: 1px; top: 2px; width: 11px; height: 9px; }
.mail tbody tr:nth-child(odd) { background: #ebebeb; }
.mail th:last-child, .mail td:last-child { text-align: right; }
.c-from { width: 702px; }
.c-time { width: 97px; }
.scrollbar { flex: none; width: 13px; background: #f0f0f0; display: flex; flex-direction: column; align-items: center; padding: 3px 0; gap: 3px; }
.arrow { width: 5px; height: 5px; margin-top: 2px; border: 1px solid #444; border-right: 0; border-bottom: 0; transform: rotate(45deg); }
.arrow.down { margin: auto 0 3px; transform: rotate(225deg); }
.thumb { width: 11px; height: 30px; background: #cdcdcd; }
.term-tabs { height: 18px; padding-left: 2px; color: #777; font-size: 9px; }
.term-tabs .tab { height: 13px; line-height: 12px; padding: 0 6px 0 7px; }
.term-tabs .tab.active { height: 15px; }

.status { flex: none; display: flex; height: 16px; border-top: 1px solid #bcbcbc; line-height: 17px; }
.status span { width: 52px; border-left: 1px solid #b4b4b4; padding-left: 4px; }
.status .help { flex: 1; border: 0; padding: 0; }
.status .profile { width: 86px; }
.status .profile + span { width: 76px; }
.status .net { width: 92px; display: flex; gap: 3px; align-items: center; }
.status .net svg { width: 18px; height: 10px; }
```

FILE: charts.js
```js
// Chart geometry is stored in thirds of a pixel of a 834-pixel-wide plot.
// A candle is "high low bodyTop bodyBottom", with "+" on a rising one; a bar is "high low".
const DATES_SHORT = ["28 Dec 2021", "30 Dec 00:00", "31 Dec 08:00", "3 Jan 16:00", "5 Jan 00:00", "6 Jan 08:00", "7 Jan 16:00", "11 Jan 00:00", "12 Jan 08:00", "13 Jan 16:00", "17 Jan 00:00", "18 Jan 08:00", "19 Jan 16:00", "21 Jan 00:00", "24 Jan 08:00", "25 Jan 16:00", "27 Jan 00:00", "28 Jan 08:00"];
const DATES_LONG = ["25 Nov 2021", "30 Nov 00:00", "2 Dec 16:00", "7 Dec 08:00", "10 Dec 00:00", "14 Dec 16:00", "17 Dec 08:00", "22 Dec 00:00", "24 Dec 16:00", "29 Dec 08:00", "3 Jan 00:00", "5 Jan 16:00", "10 Jan 08:00", "13 Jan 00:00", "17 Jan 16:00", "20 Jan 08:00", "25 Jan 00:00", "27 Jan 16:00"];

// rows("a b,c d", scale, shift) parses a list of number groups.
const rows = (text, scale = 1, shift = 0) => text.trim().split(/\s*,\s*/).map(r => {
  const up = r.endsWith("+");
  const v = r.replace("+", "").trim().split(/\s+/).map(n => n * scale + shift);
  v.up = up;
  return v;
});
const path = (text, dx = 0, scale = 1, shift = 0) => text.trim().split(/\s*,\s*/).map(r => {
  const [x, y] = r.split(/\s+/).map(Number);
  return [x + dx, y * scale + shift];
});

const charts = {
  eurusd: {
    x0: 26, y0: 67, step: 17.86, dates: DATES_SHORT, base: 1101,
    labels: ["1.14790", "1.14530", "1.14265", "1.14005", "1.13745", "1.13485", "1.13220", "1.12960", "1.12700", "1.12435", "1.12175", "1.11915", "1.11650", "1.11390", "1.11130"],
    last: ["1.11333", 1103],
    candles: rows(`575 668 577 605,598 640 606 612,598 641 606 636,610 640 621 636+,620 712 621 694,575 697 586 694+,442 600 532 586+,487 540 503 534+,467 515 504 508,503 570 507 564,562 636 563 633,509 636 626 634+,522 644 594 627+,549 628 565 597+,557 594 576 581,566 610 576 606,535 632 556 606+,486 602 499 556+,394 530 394 502+,394 426 394 416,416 496 447 472,471 535 472 532,477 540 490 532+,450 507 489 493,494 697 494 683,634 684 642 683+,610 655 616 646+,609 648 618 624,615 684 625 631,621 716 629 694,573 701 652 694+,652 698 652 672,671 701 679 685+,648 681 652 678+,607 657 620 653+,554 628 571 620+,507 577 519 572+,510 630 520 601,583 628 591 598+,582 616 591 612,609 686 609 622,561 629 601 622+,546 664 601 650,636 676 640 648+,633 662 634 648+,625 652 630 636+,586 641 594 630+,574 658 594 632,468 640 477 632+,455 482 462 480+,466 496 480 494,489 546 494 540,509 578 539 561,535 650 562 645,541 681 555 643+,549 579 555 557+,520 577 535 573+,515 540 528 535+,489 561 525 544,529 568 543 564,444 601 484 566+,427 489 441 486+,432 459 438 453+,417 447 429 440+,425 484 429 448,311 483 328 448+,227 372 231 328+,205 250 231 240,225 254 235 245,220 254 239 246+,135 249 154 241+,137 208 152 155,121 222 153 183,168 212 182 204,163 213 170 202+,121 181 131 170+,128 195 131 191,185 263 191 247,213 360 247 351,304 352 311 350+,309 353 320 345,291 347 300 344+,257 322 288 304+,277 380 289 352,310 367 319 352+,316 343 320 337,294 341 300 336+,293 397 301 363,348 396 362 371,353 459 369 417,415 580 416 573,539 597 559 572+,549 585 571 579,541 580 552 576+,499 563 522 553+,492 546 513 523+,476 539 510 512+,482 521 512 520,451 524 466 522+,463 508 467 497,442 516 496 505,476 549 489 503+,474 562 491 559,554 629 559 609,585 635 587 605+,535 594 565 589+,507 574 525 566+,491 563 492 525+,468 537 496 508,499 529 507 514,512 547 518 533,529 590 531 587,535 613 565 587+,561 651 566 650,550 665 557 650+,536 588 556 570,549 595 575 591,583 614 588 608,592 682 608 671,660 731 670 704,667 741 670 704+,616 676 632 670+,620 652 621 635+,606 635 621 625,613 684 624 674,672 717 675 686,646 711 669 686+,632 822 670 803,795 832 806 825,824 875 825 862,857 941 862 927,916 1103 927 1061,1018 1112 1060 1090,1061 1100 1075 1090+,1063 1093 1066 1085+,1042 1068 1048 1066+,1047 1141 1047 1109,1095 1115 1104 1108+`),
    average: path(`26 583,60 587,105 598,134 592,169 579,205 583,240 591,275 592,312 586,330 572,345 556,366 542,384 537,420 538,437 533,473 538,509 542,540 549,562 557,580 571,598 592,616 608,634 617,660 622,688 630,710 626,742 622,800 620,848 610,890 592,938 585,973 581,1009 578,1045 563,1081 548,1117 527,1170 519,1195 497,1223 456,1241 430,1260 406,1280 376,1313 325,1345 280,1366 256,1384 238,1405 222,1422 216,1440 216,1456 226,1480 231,1500 234,1528 255,1564 276,1598 297,1635 346,1671 389,1710 423,1750 454,1780 468,1815 497,1835 508,1860 528,1885 532,1920 530,1950 525,1990 525,2020 538,2045 551,2080 557,2130 563,2175 590,2220 612,2255 632,2290 642,2320 672,2355 720,2385 776,2420 830,2445 880,2473 926`)
  },
  gbpusd: {
    x0: 29, y0: 67, step: 8.93, dates: DATES_LONG, base: 1101,
    labels: ["1.37420", "1.37000", "1.36580", "1.36150", "1.35730", "1.35300", "1.34880", "1.34450", "1.34030", "1.33600", "1.33180", "1.32750", "1.32330", "1.31910", "1.31480"],
    last: ["1.33729", 772],
    bars: [
      ...rows(`806 852,833 890,848 882,844 880,848 884,862 898,872 898,842 938,813 890,783 878,822 856,824 852,803 850,790 866,862 922,864 922,846 904,846 886,780 886,778 852,784 1082,880 982,882 924,855 910,850 940,822 875,808 890,884 938,892 965,904 958,890 936,858 942,840 890,856 898,888 918,892 928,898 932,892 938,882 968,922 1056,985 1025,990 1048,986 1030,953 1034,950 988,930 1018,958 1000,955 988,916 962,922 965,955 1036,985 1058,995 1040,985 1036,966 1010,975 1008,992 1142,994 1090,996 1088,1044 1088,1040 1086,1040 1088,1056 1124,1038 1096,1030 1062,1025 1052,1004 1046,1018 1078,1012 1096,950 1066,940 976,962 986,968 992,980 1008,955 1006,955 1050,1030 1062,1042 1070,1052 1088,1030 1078,970 1042,990 1030,1010 1044,1015 1042,1005 1034,930 1012,952 1002,968 1064,945 1124,955 1010,960 1002,895 1000,768 972,792 886,848 892,846 888,838 872,832 868,865 940,900 976,955 1018,985 1040,1000 1040,1028 1120,996 1102,1000 1070,1040 1078,1036 1078,1038 1062,1012 1055,965 1018,962 1002,955 992,945 1000,945 992,914 1006,845 934,792 868,790 820,796 832,802 828,708 818,660 736,658 738,692 722,700 725,710 745,692 742,688 722,700 765,706 765,705 742,692 735,700 735,678 732,650 715,648 672,648 680,655 680,648 678,618 650,624 700,660 690,660 690,660 690,672 712,616 710,552 640`),
      ...rows(`738 768,722 766,722 768,762 812,702 812,690 770,708 770,720 765,722 745,700 742,702 795,645 735,655 695,668 708,700 742,684 742,690 762,745 855,755 795,755 800,765 800,702 805,700 768,630 720,660 698,662 698,665 696,636 686,638 680,572 656,558 650,630 656,640 690,685 750,652 716,632 702,668 696,640 692,635 668,635 686,618 686,590 680,560 604,562 614,564 605,552 602,560 640,608 680,592 640,592 628,575 612,525 600,535 620,515 625,492 540,484 512,480 508,482 524,412 524,370 442,360 388,362 388,340 376,302 378,298 362,300 372,345 386,352 384,318 370,310 360,325 395,378 466,412 466,420 450,418 446,402 442,408 494,455 490,466 492,452 492,452 520,468 524,510 596,556 606,550 606,552 584,540 572,524 582,482 540,474 522,495 545,496 558,505 532,490 530,498 560,450 516,500 580,552 582,555 582,568 632,600 640,602 656,612 655,628 655,616 655,640 692,682 784,765 836,745 812,740 775,755 795,758 792,738 845,735 805,698 742,698 735,695 718,702 730,690 745,690 748,690 830,785 832,815 855,845 898,850 980,888 965,920 962,912 950,880 922,880 966,935 960`, 1, -180)
    ],
    average: [
      ...path(`29 798,60 826,85 850,110 857,140 855,165 860,200 849,230 860,260 872,300 882,318 890,360 894,385 924,420 945,458 966,488 988,510 982,535 990,560 1010,580 1030,601 1035,630 1042,655 1030,680 1016,710 1014,735 1018,770 1018,800 1023,826 1012,850 980,870 955,890 920,925 918,955 936,975 968,1000 1004,1020 1018,1045 1012,1075 955,1101 895,1120 845,1140 805,1160 765,1180 740,1205 722,1230 707,1260 700,1285 683,1318 672,1335 656`),
      ...path(`40 818,68 802,100 778,130 738,160 730,205 734,230 725,265 718,290 700,320 675,350 662,385 652,424 638,450 622,490 597,540 556,567 500,600 438,640 380,665 368,695 380,715 408,745 432,770 480,800 506,830 528,870 535,905 535,950 572,985 640,1010 685,1040 725,1075 746,1110 752,1130 778,1165 828,1183 856`, 1320, 1, -180)
    ]
  },
  usdchf: {
    x0: 26, y0: 71, step: 8.93, dates: DATES_LONG, base: 1101, split: 806,
    labels: ["0.93505", "0.93210", "0.92915", "0.92620", "0.92330", "0.92035", "0.91740", "0.91450", "0.91155", "0.90860"],
    last: ["0.93101", 235],
    title: "MACD(12,26,9) 0.00405 0.00355",
    subLabels: [["0.00442", 825], ["0.00", 1012], ["-0.00352", 1157]],
    bars: rows(`165 205,150 200,150 200,150 200,160 210,160 220,190 355,328 396,340 468,425 480,360 476,352 390,332 416,350 430,354 402,392 432,428 452,446 492,462 566,508 596,346 622,482 572,496 560,472 536,470 582,466 538,506 592,490 545,488 550,486 542,458 510,490 562,486 568,485 518,496 530,492 540,468 515,486 590,510 572,542 598,500 600,482 520,446 502,432 486,350 478,340 382,370 402,370 402,375 435,325 435,335 402,346 408,350 418,395 430,382 452,385 450,416 502,480 525,470 535,475 510,465 510,435 485,350 440,375 430,400 430,398 435,380 430,378 432,415 518,485 518,470 526,455 486,368 466,390 452,430 500,446 486,428 492,424 460,420 515,478 545,402 530,400 440,405 462,410 432,402 432,385 415,338 410,277 420,345 448,368 418,372 475,372 503,440 502,496 548,515 545,510 562,515 580,490 578,418 510,400 432,402 475,402 430,388 448,405 468,452 532,458 496,462 516,460 490,458 528,442 500,380 450,382 435,405 450,398 422,380 440,395 468,450 528,510 530,510 540,510 545,462 545,478 518,480 572,548 580,545 585,552 600,545 592,520 590,525 580,510 588,520 585,518 550,514 560,515 560,535 585,568 592,568 608,558 588,575 610,585 615,535 608,565 598,570 595,575 600,528 600,510 602,575 698,622 665,632 685,602 645,560 615,563 680,590 690,655 668,650 695,645 682,645 702,668 742,658 762,708 735,672 762,642 690,648 725,635 725,510 650,530 552,538 598,545 580,525 582,538 588,575 672,588 642,592 668,600 640,598 660,610 650,596 648,555 632,555 615,565 600,514 582,540 585,492 592,452 505,468 500,478 492,480 512,430 512,438 548,535 560,535 560,495 545,475 530,376 502,345 398,322 362,328 368,335 370,345 408,330 368,312 432,392 435,418 442,422 438,402 432,418 545,498 690,652 688,640 675,642 660,640 722,672 755,735 788,720 765,722 765,738 775,725 785,715 765,660 760,658 685,615 728,622 662,645 710,625 690,650 688,648 672,652 698,598 688,625 668,612 672,572 642,564 602,564 605,580 625,595 632,598 655,588 640,605 645,610 658,615 655,612 665,610 650,592 662,560 604,575 612,600 645,625 722,678 725,690 745,700 738,680 740,655 700,652 742,660 738,615 695,650 702,635 705,605 645,520 620,505 552,515 570,530 575,556 612,560 585,490 582,488 518,472 545,398 515,400 484,390 415,325 405,205 330,163 268,220 240,218 258,235 272,205 272,218 242`),
    histogram: { zero: 1012, line: path(`26 938,62 942,71 960,80 992,89 1015,98 1050,106 1068,124 1085,151 1092,169 1104,190 1135,215 1154,240 1142,260 1132,280 1112,300 1100,330 1078,350 1068,375 1078,390 1066,412 1040,420 1020,429 1004,450 985,473 966,490 966,510 982,527 1000,536 1014,562 1022,580 1012,598 1008,607 1002,625 1003,640 1012,650 1022,665 1018,680 1012,715 1018,735 1028,750 1018,768 1010,785 1000,810 982,830 988,850 1015,870 1035,888 1056,902 1044,920 1020,935 1012,965 1016,990 1024,1010 1012,1027 1005,1045 994,1060 1008,1085 1038,1110 1040,1130 1060,1155 1070,1180 1062,1215 1044,1250 1050,1300 1052,1320 1042,1345 1056,1380 1052,1400 1060,1440 1084,1470 1078,1490 1045,1515 1012,1535 998,1555 1005,1590 1010,1625 1008,1650 985,1675 958,1697 947,1715 965,1740 968,1765 935,1780 910,1808 902,1825 925,1850 958,1870 1010,1890 1065,1910 1105,1955 1146,1975 1130,2000 1095,2040 1070,2070 1052,2100 1012,2150 1012,2190 1008,2220 1012,2240 1040,2270 1048,2300 1042,2325 1020,2350 980,2380 970,2400 945,2425 912,2440 880,2455 850,2468 832,2510 831`) },
    signal: path(`26 924,60 930,85 945,105 985,134 1035,165 1082,200 1115,230 1135,262 1144,310 1118,360 1086,400 1072,440 1040,470 1005,500 976,530 976,560 998,590 1012,640 1008,700 1014,760 1020,800 1010,845 988,875 1005,905 1034,925 1038,965 1025,1020 1012,1070 1005,1110 1018,1150 1050,1190 1063,1250 1052,1320 1051,1390 1050,1440 1066,1480 1077,1500 1070,1530 1040,1570 1004,1600 1001,1650 1004,1690 970,1720 961,1760 958,1800 925,1835 911,1860 925,1880 960,1900 1000,1930 1060,1960 1118,1985 1134,2010 1122,2060 1072,2110 1035,2150 1014,2210 1006,2250 1022,2290 1043,2330 1040,2370 1005,2430 945,2460 900,2493 860`)
  },
  usdjpy: {
    x0: 29, y0: 71, step: 17.86, dates: DATES_SHORT, base: 1101, split: 806,
    labels: ["116.235", "115.920", "", "115.295", "114.980", "114.665", "114.355", "114.040", "113.725", "113.410"],
    last: ["115.615", 283],
    title: "CCI(14) 95.8623",
    subLabels: [["262.2848", 824], ["100", 910], ["0.00", 968], ["-100", 1027], ["-342.861", 1157]],
    levels: [910, 968, 1027],
    candles: [
      ...rows(`457 495 487 494+,465 489 469 486+,460 488 475 486+,451 484 457 479+,419 460 427 457+,418 467 427 438,430 506 436 440,425 443 434 437+,410 448 418 446+,393 430 400 424+,377 405 387 402+,380 422 383 387+,380 426 382 385+,384 418 385 413,405 422 412 415+,400 413 405 410+,394 425 398 405+,390 406 398 402,381 424 402 422,401 424 405 422+,363 421 377 415+,350 380 353 377+,342 391 352 385,386 438 386 391,340 395 353 392+,343 366 351 354+,314 369 328 351+,235 333 251 330+,203 275 232 251+,109 240 131 235+,113 203 130 153,145 172 152 163,138 214 160 189,168 210 188 193,170 244 190 227,209 281 225 239,192 273 200 238+,148 204 170 200+,147 213 170 210,200 234 210 226,209 268 224 251,218 262 249 252,224 279 236 251+,206 249 228 235+,181 246 213 234+,207 234 212 216,205 250 213 230,208 251 226 229,219 295 226 282,275 302 279 298,270 301 276 299+,226 279 238 275+,232 293 237 269,266 387 268 337,319 417 336 405,363 408 381 405+,340 397 346 391+,336 375 346 363,329 399 338 363+,276 345 283 338+,267 349 283 321,320 361 320 358,341 370 356 359,333 362 342 359+,322 360 342 345,314 400 343 379,353 541 378 540,511 573 515 540+,497 543 514 527,506 546 526 530,510 577 530 537,527 615 537 597,575 662 595 648,618 652 625 648+,606 708 625 700`),
      ...rows(`658 714 668 695,644 712 652 697+,636 750 652 731,600 746 605 731+,572 630 592 605+,519 607 526 606+,520 548 522 526+,508 563 520 523+,500 530 512 521+,487 516 491 513+,490 503 492 496,490 532 497 527,396 530 450 527+,412 520 449 484,464 512 483 493,474 531 490 501,488 520 498 501,455 518 486 499+,471 588 486 576,510 581 516 576+,508 542 516 518+,516 586 517 563,560 588 562 565,540 628 558 590,509 592 527 590+,522 600 527 568,556 623 567 622,590 642 603 622+,580 610 602 604,598 716 613 678,655 717 670 677+,622 680 640 665+,640 712 640 705,672 724 705 712,694 718 704 714+,644 718 657 708+,637 688 656 680,678 750 680 721,670 753 690 722+,634 714 689 692+,634 712 638 691+,614 672 658 669,664 710 670 679,608 690 620 680+,596 662 621 658,635 684 655 669,646 680 662 667+,648 682 661 665,650 670 656 661+,594 664 604 658+,560 610 565 607+,546 582 556 566+,476 588 483 556+,456 512 494 497,481 527 483 497+,392 493 405 484+,310 410 323 409+,297 355 322 325,322 374 323 328,303 355 307 331+,290 338 307 311,255 333 270 312+,262 275 268 271+`, 1.0446)
    ],
    cci: [
      ...path(`29 940,50 938,68 942,85 932,102 889,120 897,137 942,154 884,175 878,190 867,208 865,226 892,245 902,262 920,280 942,297 936,318 937,335 932,350 952,369 961,387 880,405 829,422 885,441 997,458 875,476 880,494 876,512 828,530 836,547 831,565 866,583 895,601 912,637 942,655 958,673 953,691 928,708 942,726 978,744 1013,762 1023,780 1024,797 995,815 971,833 969,851 988,869 996,887 1050,905 1085,922 1045,940 983,958 1005,976 1093,994 1104,1012 1065,1030 1030,1048 1018,1066 1008,1083 965,1101 968,1119 993,1135 1000,1155 987,1173 976,1190 1004,1208 1153,1226 1125,1244 1072,1262 1045,1280 1034,1297 1034,1315 1040`),
      ...path(`13 987,49 1002,67 988,85 992,103 965,120 933,138 900,155 885,175 883,190 872,208 862,226 866,245 888,263 863,281 876,299 890,317 901,335 907,351 888,370 996,388 988,406 960,424 1011,442 1014,460 1010,478 956,495 968,513 1004,531 1009,549 984,567 1026,585 1021,602 985,620 1002,638 1002,656 990,674 960,692 952,709 982,727 972,745 944,763 912,781 892,799 938,817 846,835 860,853 900,870 903,888 912,906 902,924 830,942 798,960 813,978 805,995 823,1013 852,1031 838,1048 822,1066 838,1084 860,1102 864,1120 870,1156 872`, 1320, 1.0446)
    ]
  }
};

const GREEN = "#27c427", GRID = "#737b84";

function draw(svg) {
  const c = charts[svg.dataset.chart];
  const W = svg.clientWidth, H = svg.clientHeight;
  const left = 2.5, top = 2.5, right = W - 30.5, bottom = H - 15.5;
  const kx = (right - left) / 2502, ky = (bottom - top) / c.base;
  const X = x => left + (x - c.x0) * kx;
  const Y = y => top + (y - c.y0) * ky;
  const snap = v => Math.floor(v) + 0.5;
  const out = [];
  const seg = (x1, y1, x2, y2) => `M${x1} ${y1}L${x2} ${y2}`;
  const poly = pts => "M" + pts.map(p => X(p[0]).toFixed(1) + " " + Y(p[1]).toFixed(1)).join("L");
  const add = (d, stroke, extra = "") => out.push(`<path d="${d}" fill="none" stroke="${stroke}" ${extra}/>`);
  const text = (x, y, s, fill = "#fff") => out.push(`<text x="${x}" y="${Math.round(y)}" fill="${fill}">${s}</text>`);

  let grid = "", ticks = "";
  const cell = 71.44;
  for (let k = 1; k < 35; k++) grid += seg(snap(X(c.x0 + cell * k)), top, snap(X(c.x0 + cell * k)), bottom);
  c.labels.forEach((s, k) => {
    const y = snap(Y(c.y0 + 63.5 + 73.7 * k));
    grid += seg(left, y, right, y);
    ticks += seg(right, y, right + 3, y);
    if (s) text(right + 4, y + 2, s);
  });
  (c.levels || []).forEach(v => { grid += seg(left, snap(Y(v)), right, snap(Y(v))); });
  add(grid, GRID, 'stroke-dasharray="3 2"');

  c.dates.forEach((s, k) => {
    const x = snap(X(c.x0 + cell * 2 * k));
    ticks += seg(x, bottom, x, bottom + 3);
    text(x - 1, bottom + 9, s);
  });

  const lastY = snap(Y(c.last[1]));
  add(seg(left, lastY, right, lastY), "#67747f");

  if (c.bars) {
    let d = "";
    c.bars.forEach(([h, l], i) => {
      const x = snap(X(c.x0 + c.step * i));
      const f = (i * 7 % 5) / 6 + 0.15;
      const close = snap(Y(h + (l - h) * f)), open = snap(Y(h + (l - h) * (1 - f)));
      d += seg(x, Y(h), x, Y(l)) + seg(x, close, x + 1.5, close) + seg(x - 1.5, open, x, open);
    });
    add(d, GREEN);
  }
  if (c.candles) {
    c.candles.forEach((v, i) => {
      const x = snap(X(c.x0 + c.step * i)), [h, l, t, b] = v.map(Y);
      add(seg(x, h, x, l), GREEN);
      const y = snap(t), hgt = Math.max(0, Math.round(b - t) - 1);
      if (hgt < 1) add(seg(x - 2, y, x + 2, y), "#3fe03f");
      else out.push(`<rect x="${x - 1.5}" y="${y}" width="3" height="${hgt}" fill="${v.up ? "#000" : "#fff"}" stroke="${v.up ? GREEN : "#8df08d"}"/>`);
    });
  }
  if (c.average) add(poly(c.average), "#b81616");

  if (c.histogram) {
    const { zero, line } = c.histogram;
    let d = "", j = 0;
    for (let i = 0; i < c.bars.length; i++) {
      const x = c.x0 + c.step * i;
      while (j < line.length - 2 && line[j + 1][0] < x) j++;
      const [a, b] = [line[j], line[j + 1]];
      const v = a[1] + (b[1] - a[1]) * (x - a[0]) / (b[0] - a[0]);
      d += seg(snap(X(x)), Y(zero), snap(X(x)), Y(v));
    }
    add(d, "#a8a8a8");
    add(seg(left, snap(Y(zero)), right, snap(Y(zero))), "#9a9a9a", 'stroke-dasharray="2 2"');
    add(poly(c.signal), "#d01c1c", 'stroke-dasharray="2 2"');
  }
  if (c.cci) add(poly(c.cci), "#2b9a8c");
  if (c.split) {
    add(seg(left, Math.round(Y(c.split)), right, Math.round(Y(c.split))), "#c4c4c4", 'stroke-width="2"');
    text(left + 3, Y(829) + 2, c.title);
    c.subLabels.forEach(([s, y]) => {
      ticks += seg(right, snap(Y(y)), right + 2, snap(Y(y)));
      text(right + 3, Y(y) + 2, s);
    });
  }
  add(`M${left} ${bottom}V${top}H${right}V${bottom}Z` + ticks, "#e0e0e0");
  out.push(`<rect x="${right + 1}" y="${lastY - 4}" width="29" height="8" fill="#fff"/>`);
  text(right + 4, lastY + 2, c.last[0], "#000");
  svg.innerHTML = out.join("");
}

const drawAll = () => document.querySelectorAll(".plot").forEach(draw);
addEventListener("resize", drawAll);
drawAll();
```
